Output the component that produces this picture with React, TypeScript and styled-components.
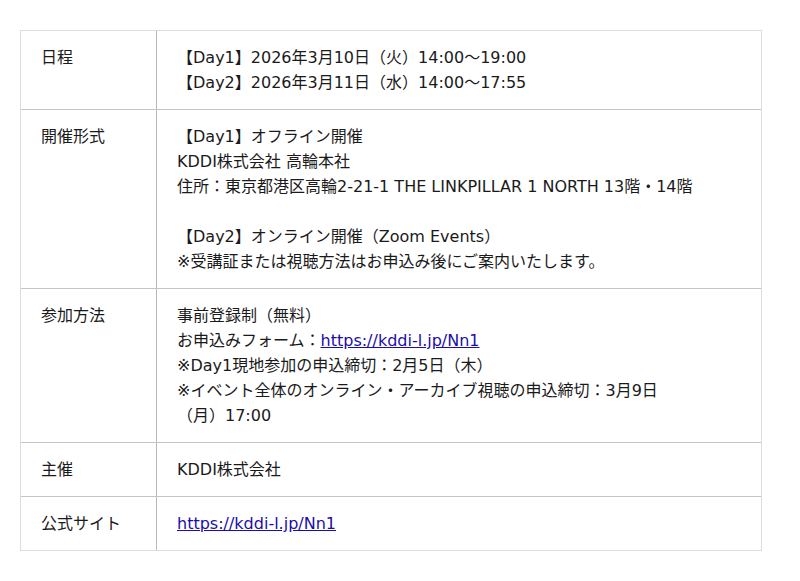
import React from 'react';
import styled, { createGlobalStyle } from 'styled-components';

const GlobalStyle = createGlobalStyle`
  body {
    margin: 0;
    background: #fff;
    font-family: "DejaVu Sans", "Noto Sans CJK JP", sans-serif;
    color: #1a1a1a;
  }
`;

const Page = styled.div`
  padding: 30px 38px 30px 20px;
`;

const Table = styled.div`
  border: 1px solid #dcdcdc;
  border-bottom: none;
  width: 740px;
`;

const Row = styled.div`
  display: grid;
  grid-template-columns: 136px 1fr;
  border-bottom: 1px solid #c4c4c4;

  &:last-child {
    border-bottom-color: #dcdcdc;
  }
`;

const Label = styled.div`
  padding: 14px 20px;
  border-right: 1px solid #b8b8b8;
  font-size: 16px;
  line-height: 25px;
`;

const Value = styled.div`
  padding: 14px 66px 14px 20px;
  font-size: 16px;
  line-height: 25px;
`;

const Line = styled.div`
  min-height: 25px;
`;

const Link = styled.a`
  color: #1a0dab;
  text-decoration: underline;
`;

const rows: { label: string; lines: React.ReactNode[] }[] = [
  {
    label: '日程',
    lines: [
      '【Day1】2026年3月10日（火）14:00～19:00',
      '【Day2】2026年3月11日（水）14:00～17:55',
    ],
  },
  {
    label: '開催形式',
    lines: [
      '【Day1】オフライン開催',
      'KDDI株式会社 高輪本社',
      '住所：東京都港区高輪2-21-1 THE LINKPILLAR 1 NORTH 13階・14階',
      '',
      '【Day2】オンライン開催（Zoom Events）',
      '※受講証または視聴方法はお申込み後にご案内いたします。',
    ],
  },
  {
    label: '参加方法',
    lines: [
      '事前登録制（無料）',
      <>お申込みフォーム：<Link href="#">https://kddi-l.jp/Nn1</Link></>,
      '※Day1現地参加の申込締切：2月5日（木）',
      '※イベント全体のオンライン・アーカイブ視聴の申込締切：3月9日（月）17:00',
    ],
  },
  { label: '主催', lines: ['KDDI株式会社'] },
  { label: '公式サイト', lines: [<Link href="#">https://kddi-l.jp/Nn1</Link>] },
];

export default function App() {
  return (
    <>
      <GlobalStyle />
      <Page>
        <Table>
          {rows.map((r, i) => (
            <Row key={i}>
              <Label>{r.label}</Label>
              <Value>
                {r.lines.map((l, j) => (
                  <Line key={j}>{l}</Line>
                ))}
              </Value>
            </Row>
          ))}
        </Table>
      </Page>
    </>
  );
}
